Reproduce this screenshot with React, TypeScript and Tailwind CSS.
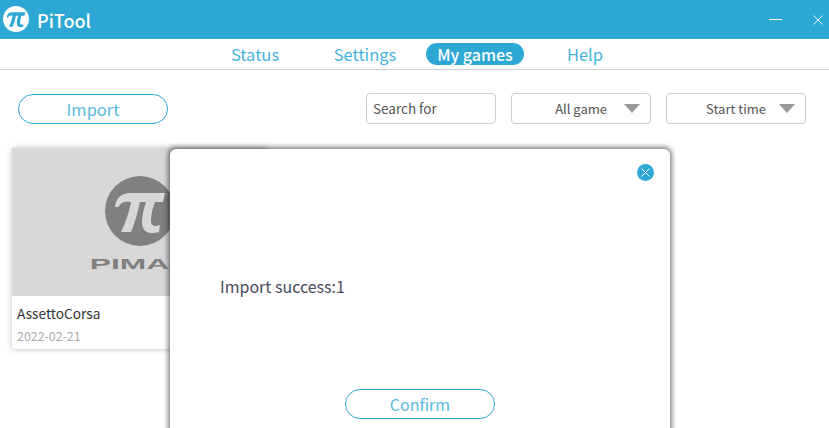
const font = "font-['Noto_Sans_CJK_SC','Noto_Sans',sans-serif]";

// pi mark shared by the title bar logo and the game placeholder
const PiMark = ({ circle, glyph, className }: { circle: string; glyph: string; className: string }) => (
  <svg viewBox="0 0 70 70" className={className}>
    <circle cx="35" cy="35" r="35" fill={circle} />
    <path
      fill={glyph}
      d="M10 31C11 22 16 17 26 17L60 17L58 26L50 26C47 34 46 40 46 45C46 50 49 51 55 49L54 56C44 59 37 56 37 46C37 39 39 32 41 26L35 26C33 36 30 46 26 56L16 56C21 46 24 36 26 26C19 25 15 27 14 31Z"
    />
  </svg>
);

const Caret = () => (
  <svg viewBox="0 0 16 9" className="h-[9px] w-[16px]">
    <path d="M0 0H16L8 9Z" fill="#999999" />
  </svg>
);

const navItems = [
  { label: "Status" },
  { label: "Settings" },
  { label: "My games", active: true },
  { label: "Help" },
];

export default function App() {
  return (
    <div className={`relative h-[428px] w-[829px] overflow-hidden bg-white ${font}`}>
      <div className="flex h-[39px] items-center justify-between bg-[#2da8d5] pl-[3px] pr-[6px]">
        <div className="flex items-center gap-[8px]">
          <PiMark circle="#ffffff" glyph="#2da8d5" className="mb-px h-[26px] w-[26px]" />
          <span className="text-[18px] font-medium leading-none text-white">PiTool</span>
        </div>
        <div className="flex items-center gap-[31px]">
          <div className="h-px w-[13px] bg-white" />
          <svg viewBox="0 0 10 10" className="h-[10px] w-[10px]">
            <path d="M0.5 0.5L9.5 9.5M9.5 0.5L0.5 9.5" stroke="#ffffff" strokeWidth="0.9" />
          </svg>
        </div>
      </div>

      <div className="flex h-[31px] items-center justify-center border-b border-[#d0d0d0] pl-[11px]">
        {navItems.map((item) => (
          <div key={item.label} className="flex w-[110px] justify-center">
            <span
              className={
                item.active
                  ? "flex h-[22px] w-[98px] items-center justify-center rounded-full bg-[#2da8d5] text-[16px] font-medium text-white"
                  : "text-[16.5px] text-[#45b4dd]"
              }
            >
              {item.label}
            </span>
          </div>
        ))}
      </div>

      <div className="flex items-end pl-[18px] pr-[23px] pt-[23px]">
        <button className="flex h-[30px] w-[150px] items-center justify-center rounded-full border border-[#2da8d5] text-[16.5px] text-[#5bbbe0]">
          Import
        </button>
        <div className="ml-auto flex h-[31px] w-[130px] items-center rounded-[4px] border border-[#cccccc] pl-[6px] text-[13.5px] text-[#555555]">
          Search for
        </div>
        <div className="ml-[15px] flex h-[31px] w-[140px] items-center justify-end gap-[17px] rounded-[4px] border border-[#cccccc] pr-[10px] text-[13px] text-[#555555]">
          All game
          <Caret />
        </div>
        <div className="ml-[15px] flex h-[31px] w-[140px] items-center justify-end gap-[13px] rounded-[4px] border border-[#cccccc] pr-[10px] text-[13px] text-[#555555]">
          Start time
          <Caret />
        </div>
      </div>

      <div className="ml-[12px] mt-[24px] h-[201px] w-[256px] rounded-[4px] bg-white shadow-[0_0_6px_rgba(0,0,0,0.25)]">
        <div className="flex h-[148px] flex-col items-center overflow-hidden bg-[#d8d8d8] pt-[28px]">
          <PiMark circle="#808080" glyph="#d8d8d8" className="h-[70px] w-[70px]" />
          <span className="mt-[11px] scale-x-[2.27] font-['Liberation_Sans',sans-serif] text-[14px] font-bold leading-none text-[#808080]">
            PIMAX
          </span>
        </div>
        <div className="pl-[5px] pt-[7px]">
          <div className="text-[13.7px] leading-[20px] text-[#333333]">AssettoCorsa</div>
          <div className="mt-[4px] text-[12.4px] leading-[18px] text-[#aaaaaa]">2022-02-21</div>
        </div>
      </div>

      {/* import result dialog */}
      <div className="absolute left-[170px] top-[149px] h-[320px] w-[500px] rounded-[6px] bg-white shadow-[0_0_5px_2px_rgba(0,0,0,0.5)]">
        <button className="absolute right-[16px] top-[15px] flex h-[17px] w-[17px] items-center justify-center rounded-full bg-[#2da8d5]">
          <svg viewBox="0 0 9 9" className="h-[9px] w-[9px]">
            <path d="M0.5 0.5L8.5 8.5M8.5 0.5L0.5 8.5" stroke="#ffffff" strokeWidth="1" />
          </svg>
        </button>
        <div className="pl-[50px] pt-[125px] text-[16px] leading-[24px] text-[#4a4a5a]">Import success:1</div>
        <div className="flex justify-center pt-[91px]">
          <button className="flex h-[30px] w-[150px] items-center justify-center rounded-full border border-[#2da8d5] text-[16px] text-[#5bbbe0]">
            Confirm
          </button>
        </div>
      </div>
    </div>
  );
}
